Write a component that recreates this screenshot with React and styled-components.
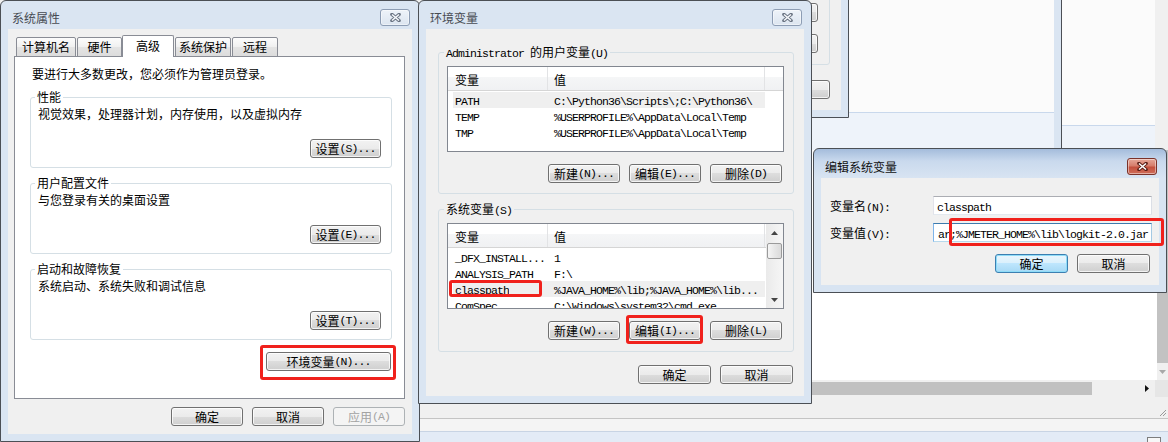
import React from "react";
import styled, { createGlobalStyle } from "styled-components";

const GlobalStyle = createGlobalStyle`
  * { box-sizing: border-box; }
  html, body { margin: 0; padding: 0; }
  body {
    background: #f0f0f0;
    color: #000;
    font-family: "Noto Sans CJK SC", "Noto Sans", sans-serif;
    font-size: 12px;
    line-height: 16px;
  }
`;

// ascii runs are drawn narrower, like the bitmap SimSun in the shot
const Latin = styled.span`
  font-family: "Liberation Mono", monospace;
  font-size: 11.5px;
  letter-spacing: -0.9px;
`;

const isAscii = (s) => /^[\x20-\x7e]+$/.test(s);
const mix = (text) =>
  text
    .split(/([\x20-\x7e]+)/)
    .filter(Boolean)
    .map((part, i) => (isAscii(part) ? <Latin key={i}>{part}</Latin> : <span key={i}>{part}</span>));

const Desktop = styled.div`
  position: relative;
  width: 1168px;
  height: 442px;
  overflow: hidden;
  background: #f0f0f0;
`;

/* ---------- window chrome ---------- */

const Win = styled.div`
  position: absolute;
  left: ${(p) => p.$x}px;
  top: ${(p) => p.$y}px;
  width: ${(p) => p.$w}px;
  height: ${(p) => p.$h}px;
  border: 1px solid #4b4f55;
  border-radius: 6px 6px 0 0;
  background: ${(p) =>
    p.$active ? "linear-gradient(#a4bcdb, #c9d9ed 12px, #d8e4f2 29px, #d8e4f2)" : "#dae5f2"};
  display: flex;
  flex-direction: column;
  padding: 0 7px 7px;
`;

const TitleBar = styled.div`
  flex: none;
  height: ${(p) => p.$h || 28}px;
  margin: 0 -7px;
  padding: ${(p) => (p.$h || 28) - 19}px 9px 0 11px;
  display: flex;
  justify-content: space-between;
  align-items: flex-start;
`;

const Caption = styled.div`
  height: 16px;
  color: ${(p) => (p.$active ? "#111" : "#474b52")};
`;

const CloseBtn = styled.div`
  width: 30px;
  height: 17px;
  margin-top: -1px;
  border: 1px solid ${(p) => (p.$active ? "#7b3229" : "#8d9db4")};
  border-radius: 3px;
  background: ${(p) =>
    p.$active
      ? "linear-gradient(#e6a899, #d67d6b 45%, #c4503d 55%, #cf6d59)"
      : "linear-gradient(#eef3f9, #dce5f0)"};
  box-shadow: inset 0 0 0 1px rgba(255, 255, 255, 0.45);
  display: flex;
  align-items: center;
  justify-content: center;
`;

function XGlyph({ active }) {
  const d = "M3 1.5 L10 7.5 M10 1.5 L3 7.5";
  return (
    <svg width="13" height="9" viewBox="0 0 13 9">
      <path d={d} stroke={active ? "#5c1f17" : "#6a7483"} strokeWidth="3.6" strokeLinecap="round" fill="none" />
      <path d={d} stroke={active ? "#ffffff" : "#f6f8fb"} strokeWidth="1.6" strokeLinecap="butt" fill="none" />
    </svg>
  );
}

const Body = styled.div`
  flex: 1;
  min-height: 0;
  background: #f0f0f0;
  display: flex;
  flex-direction: column;
  padding: ${(p) => p.$pad || "0"};
`;

/* ---------- controls ---------- */

const Btn = styled.div`
  flex: none;
  width: ${(p) => p.$w || 72}px;
  height: 19px;
  border: 1px solid ${(p) => (p.$disabled ? "#adb2b5" : p.$default ? "#3c7fb1" : "#707070")};
  border-radius: 3px;
  background: ${(p) =>
    p.$disabled
      ? "#f4f4f4"
      : p.$default
      ? "linear-gradient(#eaf6fd, #d9f0fc 50%, #bee6fd 50%, #a7d9f5)"
      : "linear-gradient(#f2f2f2, #ebebeb 50%, #dddddd 50%, #cfcfcf)"};
  box-shadow: inset 0 0 0 1px
    ${(p) => (p.$disabled ? "transparent" : p.$default ? "#8fdcf8" : "rgba(255,255,255,0.75)")};
  color: ${(p) => (p.$disabled ? "#a3a3a3" : "#000")};
  display: flex;
  align-items: center;
  justify-content: center;
  white-space: nowrap;
  line-height: 16px;
`;

const BtnRow = styled.div`
  flex: none;
  display: flex;
  justify-content: flex-end;
  gap: 9px;
  margin: ${(p) => p.$m || "0"};
`;

// red annotation frame drawn over a control
const Mark = styled.div`
  position: relative;
  display: flex;
  &::after {
    content: "";
    position: absolute;
    top: ${(p) => p.$t}px;
    right: ${(p) => p.$r}px;
    bottom: ${(p) => p.$b}px;
    left: ${(p) => p.$l}px;
    border: 3px solid #f0211c;
    border-radius: 3px;
    pointer-events: none;
    z-index: 3;
  }
`;

const Group = styled.div`
  flex: none;
  border: 1px solid #d5dfe5;
  border-radius: 3px;
  margin-top: ${(p) => p.$mt || 0}px;
  padding: ${(p) => p.$pad};
  display: flex;
  flex-direction: column;
`;

const Legend = styled.div`
  align-self: flex-start;
  height: 16px;
  margin: -9px 0 0 -3px;
  padding: 0 2px;
  background: ${(p) => p.$bg || "#f0f0f0"};
  white-space: nowrap;
`;

const GroupText = styled.div`
  height: 16px;
  margin-top: 1px;
  white-space: nowrap;
`;

/* ---------- tabs (系统属性) ---------- */

const TabStrip = styled.div`
  flex: none;
  position: relative;
  z-index: 1;
  display: flex;
  align-items: flex-end;
  height: 22px;
  margin-top: 6px;
  padding-left: 8px;
`;

const Tab = styled.div`
  width: ${(p) => p.$w}px;
  height: ${(p) => (p.$on ? 22 : 20)}px;
  margin: ${(p) => (p.$on ? "0 1px 0 -1px" : "0 1px 0 0")};
  border: 1px solid #898c95;
  border-bottom: ${(p) => (p.$on ? "none" : "1px solid #898c95")};
  border-radius: 2px 2px 0 0;
  background: ${(p) => (p.$on ? "#fff" : "linear-gradient(#fcfcfc, #f0f0f0 50%, #e4e4e4 50%, #dcdcdc)")};
  padding-bottom: ${(p) => (p.$on ? 2 : 0)}px;
  display: flex;
  align-items: center;
  justify-content: center;
  white-space: nowrap;
`;

const TabPanel = styled.div`
  flex: 1;
  min-height: 0;
  margin: -1px 7px 0 6px;
  background: #fff;
  border: 1px solid #898c95;
  padding: 9px 12px 0 15px;
  display: flex;
  flex-direction: column;
`;

const Intro = styled.div`
  height: 16px;
  padding-left: 2px;
  white-space: nowrap;
`;

/* ---------- list view (环境变量) ---------- */

const List = styled.div`
  flex: none;
  height: 86px;
  margin-top: 6px;
  border: 1px solid #828790;
  background: #fff;
  display: flex;
  overflow: hidden;
`;

const ListMain = styled.div`
  flex: 1;
  min-width: 0;
  display: flex;
  flex-direction: column;
`;

const Header = styled.div`
  flex: none;
  height: 24px;
  display: grid;
  grid-template-columns: 100px 217px 1fr;
  border-bottom: 1px solid #d5d5d5;
  background: linear-gradient(#ffffff 0, #ffffff 45%, #f5f6f7 45%, #f0f1f3 100%);
`;

const HeadCell = styled.div`
  padding: 5px 0 0 ${(p) => p.$pl || 0}px;
  border-right: ${(p) => (p.$last ? "none" : "1px solid #e2e3e5")};
  white-space: nowrap;
`;

const Rows = styled.div`
  flex: 1;
  min-height: 0;
  padding: 1px 0 0 5px;
  overflow: hidden;
`;

const Row = styled.div`
  width: 312px;
  height: 16px;
  display: grid;
  grid-template-columns: 99px 213px;
  background: ${(p) => (p.$hl ? "#efefef" : "transparent")};
`;

const Cell = styled.div`
  padding-left: 2px;
  height: 16px;
  white-space: nowrap;
  overflow: hidden;
`;

const VScroll = styled.div`
  flex: none;
  width: 17px;
  background: linear-gradient(90deg, #eaeaea, #f6f6f6);
  display: flex;
  flex-direction: column;
`;

const ScrollBtn = styled.div`
  flex: none;
  height: 17px;
  display: flex;
  align-items: center;
  justify-content: center;
`;

const ScrollThumb = styled.div`
  flex: none;
  height: 16px;
  margin: 2px 1px 0;
  border: 1px solid #9a9a9a;
  border-radius: 2px;
  background: linear-gradient(90deg, #f5f5f5, #e6e6e6 50%, #dadada);
`;

const ScrollGap = styled.div`
  flex: 1;
`;

function Arrow({ dir, color = "#444" }) {
  const shapes = {
    up: ["M0 4L3.5 0L7 4Z", 7, 4],
    down: ["M0 0L3.5 4L7 0Z", 7, 4],
    right: ["M0 0L4 3.5L0 7Z", 4, 7],
  };
  const [d, w, h] = shapes[dir];
  return (
    <svg width={w} height={h} viewBox={`0 0 ${w} ${h}`}>
      <path d={d} fill={color} />
    </svg>
  );
}

const userVars = [
  ["PATH", "C:\\Python36\\Scripts\\;C:\\Python36\\", true],
  ["TEMP", "%USERPROFILE%\\AppData\\Local\\Temp"],
  ["TMP", "%USERPROFILE%\\AppData\\Local\\Temp"],
];

const sysVars = [
  ["_DFX_INSTALL...", "1"],
  ["ANALYSIS_PATH", "F:\\"],
  ["classpath", "%JAVA_HOME%\\lib;%JAVA_HOME%\\lib...", true, true],
  ["ComSpec", "C:\\Windows\\system32\\cmd.exe"],
];

function VarList({ rows, scroll }) {
  return (
    <List>
      <ListMain>
        <Header>
          <HeadCell $pl={7}>变量</HeadCell>
          <HeadCell $pl={6}>值</HeadCell>
          <HeadCell $last />
        </Header>
        <Rows>
          {rows.map(([name, value, hl, marked]) => {
            const nameCell = (
              <Cell>
                <Latin>{name}</Latin>
              </Cell>
            );
            return (
              <Row key={name} $hl={hl}>
                {marked ? (
                  <Mark $t={-1} $r={10} $b={0} $l={-4}>
                    {nameCell}
                  </Mark>
                ) : (
                  nameCell
                )}
                <Cell>
                  <Latin>{value}</Latin>
                </Cell>
              </Row>
            );
          })}
        </Rows>
      </ListMain>
      {scroll && (
        <VScroll>
          <ScrollBtn>
            <Arrow dir="up" />
          </ScrollBtn>
          <ScrollThumb />
          <ScrollGap />
          <ScrollBtn>
            <Arrow dir="down" />
          </ScrollBtn>
        </VScroll>
      )}
    </List>
  );
}

/* ---------- edit form (编辑系统变量) ---------- */

const Form = styled.div`
  display: grid;
  grid-template-columns: 103px 1fr;
  row-gap: 8px;
  align-items: center;
  padding: 18px 7px 0 9px;
`;

const FormLabel = styled.div`
  height: 16px;
  white-space: nowrap;
`;

const Field = styled.div`
  flex: 1;
  height: 19px;
  border: 1px solid;
  border-color: ${(p) => (p.$focus ? "#3d7bad #a4c9e3 #b7d9ed #7eb4ea" : "#abadb3 #dbdfe6 #e3e9ef #e2e3ea")};
  background: #fff;
  padding-left: ${(p) => p.$pl || 3}px;
  line-height: 17px;
  white-space: nowrap;
  overflow: hidden;
`;

/* ---------- things behind the dialogs ---------- */

const SidePane = styled.div`
  position: absolute;
  left: 1000px;
  top: -10px;
  width: 168px;
  height: 170px;
  display: flex;
`;

const SideMain = styled.div`
  flex: 1;
  display: flex;
  flex-direction: column;
`;

const PaneWhite = styled.div`
  flex: ${(p) => (p.$h ? "none" : 1)};
  height: ${(p) => (p.$h ? `${p.$h}px` : "auto")};
  background: #fbfbfb;
`;

const PanePale = styled.div`
  flex: ${(p) => (p.$h ? "none" : 1)};
  height: ${(p) => (p.$h ? `${p.$h}px` : "auto")};
  background: #eef3fa;
  border-top: 1px solid #c9d8ec;
`;

const SideStrip = styled.div`
  width: 13px;
  background: #f0f0f0;
`;

const BackBody = styled(Body)`
  align-items: flex-end;
  padding: 4px 11px 11px 0;
`;

const BackGroup = styled(Group)`
  flex: 1;
  width: 200px;
  justify-content: flex-end;
  align-items: flex-end;
  gap: 12px;
`;

const Editor = styled.div`
  position: absolute;
  left: 0;
  top: 150px;
  width: 1168px;
  height: 292px;
  display: flex;
  flex-direction: column;
  background: #fff;
`;

const EditorMain = styled.div`
  flex: 1;
  min-height: 0;
  display: flex;
`;

const EditorText = styled.div`
  flex: 1;
  background: #fff;
`;

const EdVScroll = styled.div`
  width: 11px;
  display: flex;
  flex-direction: column;
  background: #f0f0f0;
`;

const EdVThumb = styled.div`
  flex: 1;
  background: #c2c2c2;
`;

const EdArrowBox = styled.div`
  flex: none;
  width: ${(p) => p.$w || 17}px;
  height: 17px;
  display: flex;
  align-items: center;
  justify-content: center;
`;

const EdHScroll = styled.div`
  flex: none;
  height: 17px;
  display: flex;
  background: #f0f0f0;
`;

const EdHTrack = styled.div`
  flex: 1;
  padding: 2px 0;
  display: flex;
`;

const EdHThumb = styled.div`
  margin-left: 420px;
  width: 672px;
  background: #c1c1c1;
`;

const EdCorner = styled.div`
  width: 13px;
  background: #e6e6e6;
`;

const StatusBar = styled.div`
  flex: none;
  height: 22px;
  background: #f0f0f0;
  border-bottom: 1px solid #c4c4c4;
  display: flex;
  justify-content: flex-end;
  align-items: flex-end;
  padding: 0 1px 1px 0;
`;

const InfoBar = styled.div`
  flex: none;
  height: 13px;
  background: #f4f4f4;
  border-bottom: 1px solid #c8d4e4;
`;

const TaskBar = styled.div`
  flex: none;
  height: 10px;
  background: #e3ebf6;
  display: flex;
  justify-content: flex-end;
  padding: 5px 7px 0 0;
  overflow: hidden;
`;

const MiniClose = styled.div`
  width: 14px;
  height: 12px;
  border: 1px solid #7d7d7d;
  background: #f7f7f7;
`;

function Grip() {
  return (
    <svg width="8" height="8" viewBox="0 0 8 8">
      <path d="M7 1L1 7M7 4L4 7" stroke="#9a9a9a" strokeWidth="1" />
    </svg>
  );
}

const tabs = [
  ["计算机名", 60],
  ["硬件", 45],
  ["高级", 52, true],
  ["系统保护", 56],
  ["远程", 46],
];

const perfGroups = [
  ["性能", "视觉效果，处理器计划，内存使用，以及虚拟内存", "设置(S)..."],
  ["用户配置文件", "与您登录有关的桌面设置", "设置(E)..."],
  ["启动和故障恢复", "系统启动、系统失败和调试信息", "设置(T)..."],
];

export default function App() {
  return (
    <>
      <GlobalStyle />
      <Desktop>
        {/* background windows */}
        <SidePane>
          <SideMain>
            <PaneWhite $h={135} />
            <PanePale />
          </SideMain>
          <SideStrip />
        </SidePane>

        <Win $x={700} $y={-50} $w={362} $h={210}>
          <TitleBar />
          <Body>
            <PaneWhite />
            <PanePale $h={40} />
          </Body>
        </Win>

        <Editor>
          <EditorMain>
            <EditorText />
            <EdVScroll>
              <EdVThumb />
              <EdArrowBox $w={11}>
                <Arrow dir="down" color="#a8a8a8" />
              </EdArrowBox>
            </EdVScroll>
          </EditorMain>
          <EdHScroll>
            <EdHTrack>
              <EdHThumb />
            </EdHTrack>
            <EdArrowBox>
              <Arrow dir="right" color="#111" />
            </EdArrowBox>
            <EdCorner />
          </EdHScroll>
          <StatusBar>
            <Grip />
          </StatusBar>
          <InfoBar />
          <TaskBar>
            <MiniClose />
          </TaskBar>
        </Editor>

        <Win $x={600} $y={-60} $w={249} $h={178}>
          <TitleBar />
          <BackBody>
            <BackGroup $pad="0 11px 11px">
              <Btn />
              <Btn />
            </BackGroup>
            <BtnRow $m="15px 0 0 0">
              <Btn $w={90} />
            </BtnRow>
          </BackBody>
        </Win>

        {/* 系统属性 */}
        <Win $x={0} $y={0} $w={420} $h={442}>
          <TitleBar>
            <Caption>系统属性</Caption>
            <CloseBtn>
              <XGlyph />
            </CloseBtn>
          </TitleBar>
          <Body>
            <TabStrip>
              {tabs.map(([label, w, on]) => (
                <Tab key={label} $w={w} $on={on}>
                  {label}
                </Tab>
              ))}
            </TabStrip>
            <TabPanel>
              <Intro>要进行大多数更改，您必须作为管理员登录。</Intro>
              {perfGroups.map(([title, text, btn]) => (
                <Group key={title} $mt={15} $pad="0 10px 9px 7px">
                  <Legend $bg="#fff">{title}</Legend>
                  <GroupText>{text}</GroupText>
                  <BtnRow $m="17px 0 0 0">
                    <Btn $w={71}>{mix(btn)}</Btn>
                  </BtnRow>
                </Group>
              ))}
              <BtnRow $m="12px 1px 0 0">
                <Mark $t={-7} $r={-5} $b={-9} $l={-6}>
                  <Btn $w={125}>{mix("环境变量(N)...")}</Btn>
                </Mark>
              </BtnRow>
            </TabPanel>
            <BtnRow $m="8px 7px 8px 0">
              <Btn>确定</Btn>
              <Btn>取消</Btn>
              <Btn $disabled>{mix("应用(A)")}</Btn>
            </BtnRow>
          </Body>
        </Win>

        {/* 环境变量 */}
        <Win $x={418} $y={0} $w={394} $h={404}>
          <TitleBar>
            <Caption>环境变量</Caption>
            <CloseBtn>
              <XGlyph />
            </CloseBtn>
          </TitleBar>
          <Body $pad="0 10px 0 12px">
            <Group $mt={23} $pad="0 9px 10px 8px">
              <Legend>{mix("Administrator 的用户变量(U)")}</Legend>
              <VarList rows={userVars} />
              <BtnRow $m="12px 2px 0 0">
                <Btn>{mix("新建(N)...")}</Btn>
                <Btn>{mix("编辑(E)...")}</Btn>
                <Btn>{mix("删除(D)")}</Btn>
              </BtnRow>
            </Group>
            <Group $mt={15} $pad="0 9px 11px 8px">
              <Legend>{mix("系统变量(S)")}</Legend>
              <VarList rows={sysVars} scroll />
              <BtnRow $m="12px 2px 0 0">
                <Btn>{mix("新建(W)...")}</Btn>
                <Mark $t={-6} $r={-2} $b={-4} $l={-3}>
                  <Btn>{mix("编辑(I)...")}</Btn>
                </Mark>
                <Btn>{mix("删除(L)")}</Btn>
              </BtnRow>
            </Group>
            <BtnRow $m="13px 1px 0 0">
              <Btn $w={73}>确定</Btn>
              <Btn $w={73}>取消</Btn>
            </BtnRow>
          </Body>
        </Win>

        {/* 编辑系统变量 */}
        <Win $x={813} $y={148} $w={354} $h={145} $active>
          <TitleBar $h={29}>
            <Caption $active>编辑系统变量</Caption>
            <CloseBtn $active>
              <XGlyph active />
            </CloseBtn>
          </TitleBar>
          <Body>
            <Form>
              <FormLabel>{mix("变量名(N):")}</FormLabel>
              <Field>
                <Latin>classpath</Latin>
              </Field>
              <FormLabel>{mix("变量值(V):")}</FormLabel>
              <Mark $t={-5} $r={-12} $b={-4} $l={16}>
                <Field $focus $pl={4}>
                  <Latin>{"ar;%JMETER_HOME%\\lib\\logkit-2.0.jar"}</Latin>
                </Field>
              </Mark>
            </Form>
            <BtnRow $m="12px 9px 0 0">
              <Btn $w={73} $default>
                确定
              </Btn>
              <Btn $w={73}>取消</Btn>
            </BtnRow>
          </Body>
        </Win>
      </Desktop>
    </>
  );
}
